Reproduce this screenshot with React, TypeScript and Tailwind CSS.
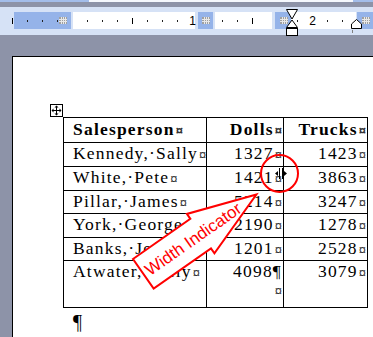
import React from 'react';

const rows = [
  { name: 'Kennedy,·Sally', dolls: '1327', trucks: '1423', h: 'h-[24px]' },
  { name: 'White,·Pete', dolls: '1421', trucks: '3863', h: 'h-[24px]' },
  { name: 'Pillar,·James', dolls: '5214', trucks: '3247', h: 'h-[23px]' },
  { name: 'York,·George', dolls: '2190', trucks: '1278', h: 'h-[24px]' },
  { name: 'Banks,·Jeff', dolls: '1201', trucks: '2528', h: 'h-[23px]' },
];

// ruler marks, one slot every 15px
const marks: (string | null)[] = [
  'tick', 'dot', 'dot', 'dot', null, 'dot', 'dot', 'dot', 'tick', 'dot', 'dot', 'dot', '1',
  null, 'dot', 'dot', 'tick', null, null, 'dot', '2', 'dot', 'dot', null,
];

function End() {
  return (
    <span className="ml-[1px] font-['Liberation_Sans',sans-serif] text-[13px] tracking-normal text-[#333]">¤</span>
  );
}

function Grid() {
  return (
    <svg width="8" height="7" viewBox="0 0 8 7">
      <rect width="8" height="7" fill="#a0a0a0" />
      <rect x="2" y="0" width="1" height="7" fill="#e8e8e8" />
      <rect x="4" y="0" width="1" height="7" fill="#e8e8e8" />
      <rect x="6" y="0" width="1" height="7" fill="#e8e8e8" />
      <rect x="0" y="2" width="8" height="1" fill="#e8e8e8" />
      <rect x="0" y="4" width="8" height="1" fill="#e8e8e8" />
    </svg>
  );
}

function Ruler() {
  return (
    <div className="relative h-[28px] bg-[#d6e2f6]">
      <div className="mt-[5px] flex h-[17px]">
        <div className="ml-[14px] flex w-[57px] items-center justify-end bg-[#95b3e9] pr-[4px]">
          <Grid />
        </div>
        <div className="ml-[2px] w-[122px] bg-white" />
        <div className="ml-[3px] flex w-[15px] items-center justify-center bg-[#95b3e9]">
          <Grid />
        </div>
        <div className="ml-[2px] w-[57px] bg-white" />
        <div className="ml-[3px] flex w-[16px] items-center pl-[5px] bg-[#95b3e9]">
          <Grid />
        </div>
        <div className="w-[65px] bg-white" />
        <div className="ml-[1px] flex flex-1 items-center pl-[5px] bg-[#95b3e9]">
          <Grid />
        </div>
      </div>

      {/* scale marks */}
      <div className="absolute left-0 top-[5px] flex h-[17px] items-center pl-[5px]">
        {marks.map((m, i) => (
          <div key={i} className="flex w-[15px] items-center justify-center">
            {m === 'dot' && <div className="h-[2px] w-[1px] bg-[#222]" />}
            {m === 'tick' && <div className="h-[6px] w-[1px] bg-black" />}
            {(m === '1' || m === '2') && (
              <span className="font-['Liberation_Sans',sans-serif] text-[12px] leading-none text-black">{m}</span>
            )}
          </div>
        ))}
      </div>

      {/* indent markers */}
      <svg className="absolute left-[286px] top-[2px]" width="12" height="27" viewBox="0 0 12 27">
        <polygon points="0.5,0.5 11.5,0.5 6,10" fill="white" stroke="black" />
        <polygon points="6,11 11.5,18.5 0.5,18.5" fill="white" stroke="black" />
        <rect x="0.5" y="19.5" width="11" height="7" fill="white" stroke="black" />
      </svg>
      <svg className="absolute left-[351px] top-[12px]" width="12" height="10" viewBox="0 0 12 10">
        <polygon points="0.5,9.5 0.5,5 5.5,0.5 10.5,5 10.5,9.5" fill="white" stroke="black" />
      </svg>
      <div className="absolute left-[352px] top-[23px] h-[3px] w-[1px] bg-[#808080]" />
    </div>
  );
}

export default function App() {
  return (
    <div className="relative flex h-[337px] w-[373px] flex-col overflow-hidden bg-[#8d93a8]">
      {/* toolbar edge */}
      <div className="flex h-[2px]">
        <div className="w-[89px] bg-[#a3bdea]" />
        <div className="w-[264px] bg-[#f5f8fd]" />
        <div className="flex-1 bg-[#a3bdea]" />
      </div>
      <div className="h-[5px]" />
      <Ruler />

      {/* page */}
      <div className="ml-[12px] mt-[21px] flex-1 border-l border-t border-black bg-white">
        <div className="ml-[37px] mt-[47px] flex h-[13px] w-[13px] items-center justify-center border border-black">
          <svg width="11" height="11" viewBox="0 0 11 11">
            <path d="M5.5 1v9M1 5.5h9" stroke="black" strokeWidth="1" />
            <path d="M5.5 0.5l-2 2h4zM5.5 10.5l-2-2h4zM0.5 5.5l2-2v4zM10.5 5.5l-2-2v4z" fill="black" />
          </svg>
        </div>

        <div className="ml-[50px] w-[305px] border-l border-t border-black font-['Liberation_Serif',serif] text-[17.5px] leading-[18px] tracking-[1.2px] text-black">
          <div className="flex h-[25px] border-b border-black font-bold">
            <div className="w-[143px] whitespace-nowrap border-r border-black pl-[9px] pt-[2px]">
              Salesperson<End />
            </div>
            <div className="w-[77px] whitespace-nowrap border-r border-black pr-[1px] pt-[2px] text-right">
              Dolls<End />
            </div>
            <div className="w-[84px] whitespace-nowrap border-r border-black pr-[1px] pt-[2px] text-right">
              Trucks<End />
            </div>
          </div>
          {rows.map((r) => (
            <div key={r.name} className={`flex border-b border-black ${r.h}`}>
              <div className="w-[143px] whitespace-nowrap border-r border-black pl-[9px] pt-[1px]">
                {r.name}<End />
              </div>
              <div className="w-[77px] whitespace-nowrap border-r border-black pr-[1px] pt-[1px] text-right">
                {r.dolls}<End />
              </div>
              <div className="w-[84px] whitespace-nowrap border-r border-black pr-[1px] pt-[1px] text-right">
                {r.trucks}<End />
              </div>
            </div>
          ))}
          <div className="flex h-[47px] border-b border-black">
            <div className="w-[143px] whitespace-nowrap border-r border-black pl-[9px] pt-[1px]">
              Atwater,·Sally<End />
            </div>
            <div className="w-[77px] whitespace-nowrap border-r border-black pr-[1px] pt-[1px] text-right">
              <div>4098¶</div>
              <div><End /></div>
            </div>
            <div className="w-[84px] whitespace-nowrap border-r border-black pr-[1px] pt-[1px] text-right">
              3079<End />
            </div>
          </div>
        </div>

        <div className="ml-[60px] mt-[4px] font-['Liberation_Serif',serif] text-[20px] leading-[20px] text-black">
          ¶
        </div>
      </div>

      {/* callout and resize cursor */}
      <svg className="pointer-events-none absolute left-0 top-0" width="373" height="337" viewBox="0 0 373 337">
        <g transform="translate(133,259) rotate(-35)">
          <polygon
            points="0,0 70,0 70,-6 138,18 70,42 70,36 0,36"
            fill="white"
            stroke="#ff0000"
            strokeWidth="2"
          />
          <text x="4" y="24" fill="#ff0000" fontSize="17" fontFamily="Liberation Sans, Arial, sans-serif">
            Width Indicator
          </text>
        </g>
        <circle cx="279.5" cy="173.5" r="18.5" fill="none" stroke="#ff0000" strokeWidth="2" />
        <rect x="279" y="168" width="1" height="11" fill="black" />
        <rect x="282" y="168" width="1" height="11" fill="black" />
        <polygon points="275,173.5 278,171 278,176" fill="black" />
        <polygon points="287,173.5 284,171 284,176" fill="black" />
        <rect x="283" y="173" width="1" height="1" fill="black" />
      </svg>
    </div>
  );
}
